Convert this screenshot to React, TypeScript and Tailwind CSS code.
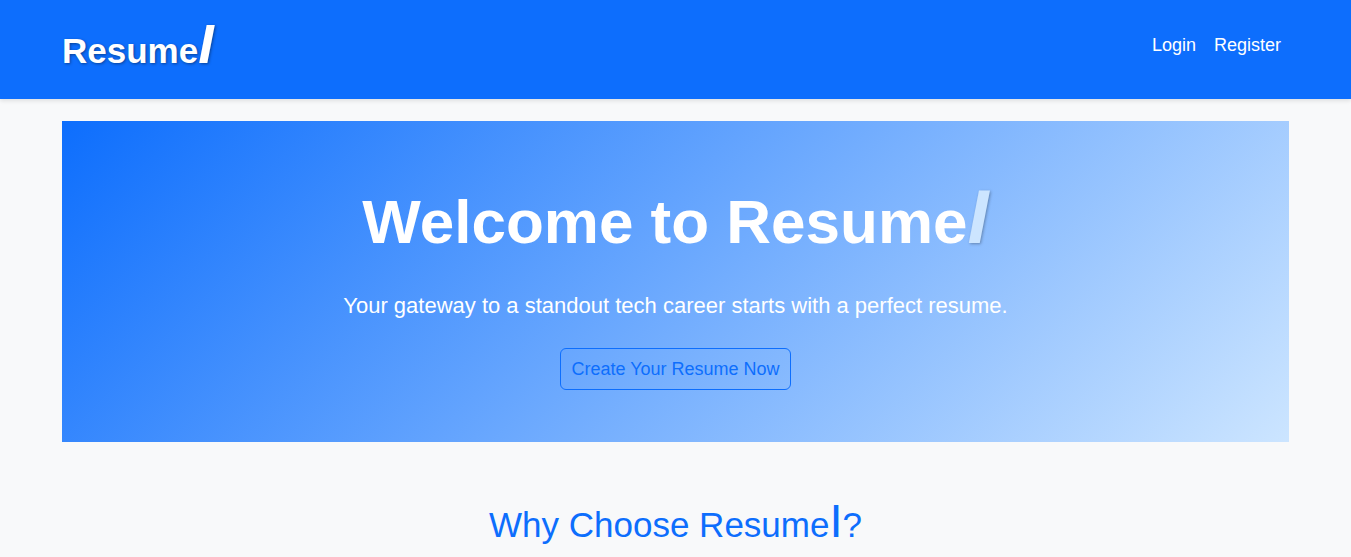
export default function App() {
  return (
    <div className="min-h-screen bg-[#f8f9fa] font-['Liberation_Sans',Arial,sans-serif] text-lg leading-[27px] text-white">
      <header className="bg-[#0d6efd] pb-[21px] shadow-[0_2px_4px_rgba(0,0,0,0.1)]">
        <div className="flex items-start justify-between px-[62px]">
          <a href="#home" className="pt-[17px] text-[35px] font-bold leading-[54px] [text-shadow:1px_1px_3px_rgba(0,0,0,0.4)]">
            Resume<span className="text-[56px] italic">I</span>
          </a>
          <nav aria-label="Account" className="flex gap-[18px] pr-2 pt-8">
            <a href="#login">Login</a>
            <a href="#register">Register</a>
          </nav>
        </div>
      </header>
      <main className="px-[62px] pt-[22px] text-center">
        <section className="bg-[linear-gradient(135deg,#0d6efd,#cce5ff)] px-9 pb-[52px] pt-[51px]">
          <h1 className="text-[62px] font-bold leading-[90px]">
            Welcome to Resume<span className="text-[76px] italic text-[#cce5ff] [text-shadow:1px_1px_3px_rgba(0,0,0,0.3)]">I</span>
          </h1>
          <p className="mt-[23px] text-[22px] leading-8">Your gateway to a standout tech career starts with a perfect resume.</p>
          <button type="button" className="mt-[26px] rounded-md border border-[#0d6efd] px-2.5 py-[6px] leading-7 text-[#0d6efd]">
            Create Your Resume Now
          </button>
        </section>
        <h2 className="mt-[52px] text-[35px] leading-[54px] text-[#0d6efd]">
          Why Choose Resume<span className="text-[47px]">I</span>?
        </h2>
      </main>
    </div>
  );
}
